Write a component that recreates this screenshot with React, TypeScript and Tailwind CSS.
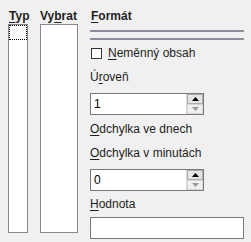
import React from 'react';

const font = { fontFamily: '"Liberation Sans", Arial, sans-serif' };

const U: React.FC<{ children: React.ReactNode }> = ({ children }) => (
  <span className="underline underline-offset-2">{children}</span>
);

const Spin: React.FC<{ value: string }> = ({ value }) => (
  <div className="flex h-[22px] w-[114px] border border-[#7a7a7a] bg-white">
    <div className="flex-1 pl-[3px] text-[12px] leading-[20px] text-black">{value}</div>
    <div className="flex w-[17px] flex-col border-l border-[#d9d9d9] bg-[#f0f0f0]">
      <div className="flex h-[10px] items-center justify-center border border-[#adadad] bg-[#e5e5e5]">
        <svg width="7" height="4" viewBox="0 0 7 4"><path d="M0 4 L3.5 0 L7 4 Z" fill="#000" /></svg>
      </div>
      <div className="flex flex-1 items-center justify-center border border-[#d6d6d6] bg-[#f0f0f0]">
        <svg width="7" height="4" viewBox="0 0 7 4"><path d="M0 0 L3.5 4 L7 0 Z" fill="#9a9a9a" /></svg>
      </div>
    </div>
  </div>
);

export default function App() {
  return (
    <div className="flex h-[242px] w-[251px] bg-[#f0f0f0] pl-[8px] pt-[9px] text-[12px] text-[#1e1e1e]" style={font}>
      <div className="flex w-[20px] flex-col">
        <div className="h-[15px] pl-[1px] font-bold leading-[15px]"><U>T</U>yp</div>
        <div className="mb-[9px] flex-1 border border-[#828790] bg-white">
          <div className="h-[15px] border border-dotted border-black" />
        </div>
      </div>
      <div className="ml-[12px] flex w-[38px] flex-col">
        <div className="h-[15px] font-bold leading-[15px]">Vy<U>b</U>rat</div>
        <div className="mb-[9px] flex-1 border border-[#828790] bg-white" />
      </div>
      <div className="ml-[12px] flex w-[154px] flex-col">
        <div className="h-[15px] pl-[1px] font-bold leading-[15px]"><U>F</U>ormát</div>
        <div className="mt-[6px] h-[2px] bg-[#8c8f9b]" />
        <div className="mt-[6px] h-[2px] bg-[#8c8f9b]" />
        <div className="mt-[7px] flex h-[13px] items-center">
          <div className="ml-[1px] h-[11px] w-[11px] border border-[#333] bg-white" />
          <span className="ml-[6px] leading-[15px]"><U>N</U>eměnný obsah</span>
        </div>
        <div className="mt-[10px] h-[15px] leading-[15px]">Ú<U>r</U>oveň</div>
        <div className="mt-[8px]"><Spin value="1" /></div>
        <div className="mt-[7px] h-[15px] leading-[15px]"><U>O</U>dchylka ve dnech</div>
        <div className="mt-[9px] h-[15px] leading-[15px]"><U>O</U>dchylka v minutách</div>
        <div className="mt-[8px]"><Spin value="0" /></div>
        <div className="mt-[6px] h-[15px] leading-[15px]"><U>H</U>odnota</div>
        <div className="mt-[5px] h-[22px] w-[154px] border border-[#7a7a7a] bg-white" />
      </div>
    </div>
  );
}
